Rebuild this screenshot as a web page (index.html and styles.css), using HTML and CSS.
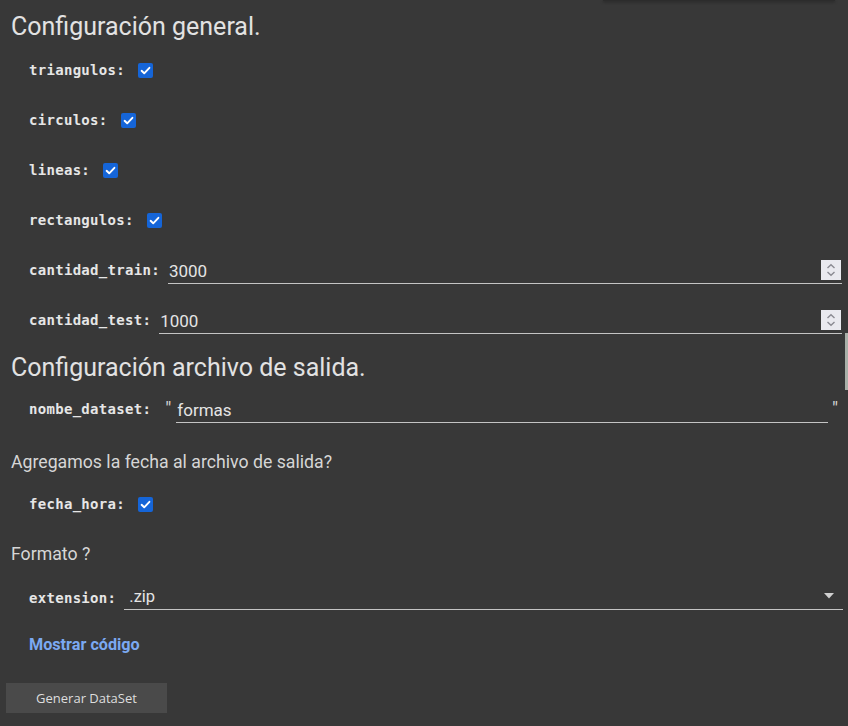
FILE: index.html
```
<!DOCTYPE html>
<html lang="es">
<head>
<meta charset="utf-8">
<title>Configuración</title>
<link rel="stylesheet" href="styles.css">
</head>
<body>
<div class="toolbar-edge"></div>
<div class="scroll-thumb"></div>
<main class="form">
  <h2 class="section-title first">Configuración general.</h2>

  <div class="field">
    <span class="label">triangulos:</span>
    <span class="check"><svg viewBox="0 0 15 15" width="15" height="15"><rect x="0" y="0" width="15" height="15" rx="2" fill="#1565d8"/><path d="M3.6 7.8 L6.2 10.3 L11.4 4.8" fill="none" stroke="#fff" stroke-width="1.9" stroke-linecap="round" stroke-linejoin="round"/></svg></span>
  </div>
  <div class="field">
    <span class="label">circulos:</span>
    <span class="check"><svg viewBox="0 0 15 15" width="15" height="15"><rect x="0" y="0" width="15" height="15" rx="2" fill="#1565d8"/><path d="M3.6 7.8 L6.2 10.3 L11.4 4.8" fill="none" stroke="#fff" stroke-width="1.9" stroke-linecap="round" stroke-linejoin="round"/></svg></span>
  </div>
  <div class="field">
    <span class="label">lineas:</span>
    <span class="check"><svg viewBox="0 0 15 15" width="15" height="15"><rect x="0" y="0" width="15" height="15" rx="2" fill="#1565d8"/><path d="M3.6 7.8 L6.2 10.3 L11.4 4.8" fill="none" stroke="#fff" stroke-width="1.9" stroke-linecap="round" stroke-linejoin="round"/></svg></span>
  </div>
  <div class="field">
    <span class="label">rectangulos:</span>
    <span class="check"><svg viewBox="0 0 15 15" width="15" height="15"><rect x="0" y="0" width="15" height="15" rx="2" fill="#1565d8"/><path d="M3.6 7.8 L6.2 10.3 L11.4 4.8" fill="none" stroke="#fff" stroke-width="1.9" stroke-linecap="round" stroke-linejoin="round"/></svg></span>
  </div>
  <div class="field">
    <span class="label">cantidad_train:</span>
    <div class="input number">
      <span class="value">3000</span>
      <span class="spinner"><svg viewBox="0 0 20 20" width="20" height="20"><path d="M6.5 8 L10 4.8 L13.5 8" fill="none" stroke="#8a8a92" stroke-width="1.4"/><path d="M6.5 12 L10 15.2 L13.5 12" fill="none" stroke="#8a8a92" stroke-width="1.4"/></svg></span>
    </div>
  </div>
  <div class="field">
    <span class="label">cantidad_test:</span>
    <div class="input number">
      <span class="value">1000</span>
      <span class="spinner"><svg viewBox="0 0 20 20" width="20" height="20"><path d="M6.5 8 L10 4.8 L13.5 8" fill="none" stroke="#8a8a92" stroke-width="1.4"/><path d="M6.5 12 L10 15.2 L13.5 12" fill="none" stroke="#8a8a92" stroke-width="1.4"/></svg></span>
    </div>
  </div>

  <h2 class="section-title second">Configuración archivo de salida.</h2>

  <div class="field field-tight">
    <span class="label">nombe_dataset:</span>
    <span class="quote open">"</span>
    <div class="input text"><span class="value">formas</span></div>
    <span class="quote close">"</span>
  </div>

  <p class="note note-1">Agregamos la fecha al archivo de salida?</p>

  <div class="field field-fecha">
    <span class="label">fecha_hora:</span>
    <span class="check"><svg viewBox="0 0 15 15" width="15" height="15"><rect x="0" y="0" width="15" height="15" rx="2" fill="#1565d8"/><path d="M3.6 7.8 L6.2 10.3 L11.4 4.8" fill="none" stroke="#fff" stroke-width="1.9" stroke-linecap="round" stroke-linejoin="round"/></svg></span>
  </div>

  <p class="note note-2">Formato ?</p>

  <div class="field field-ext">
    <span class="label">extension:</span>
    <div class="input select">
      <span class="value">.zip</span>
      <svg class="caret" viewBox="0 0 10 6" width="10" height="6"><path d="M0 0 L10 0 L5 5.5 Z" fill="#d0d0d0"/></svg>
    </div>
  </div>

  <a class="show-code" href="#">Mostrar código</a>

  <button class="run-button" type="button">Generar DataSet</button>
</main>
</body>
</html>
```

FILE: styles.css
```
html, body {
  margin: 0;
  padding: 0;
  background: #383838;
  height: 100%;
  overflow: hidden;
}

body {
  font-family: Roboto, "Noto Sans", sans-serif;
  color: #dcdcdc;
  position: relative;
}

.toolbar-edge {
  position: absolute;
  top: 0;
  left: 603px;
  width: 232px;
  height: 1px;
  background: #2c2c2c;
  box-shadow: 0 1px 3px rgba(0, 0, 0, 0.55);
}

.scroll-thumb {
  position: absolute;
  top: 333px;
  right: 0;
  width: 3px;
  height: 57px;
  background: #a9b0a9;
}

.form {
  display: flex;
  flex-direction: column;
  align-items: flex-start;
  padding: 11px 6px 0 11px;
}

.section-title {
  margin: 0;
  height: 32px;
  line-height: 32px;
  font-size: 25px;
  font-weight: 400;
  color: #e2e2e2;
  white-space: nowrap;
}

.section-title.first {
  margin-bottom: 3px;
}

.section-title.second {
  margin-top: 6px;
}

.field {
  display: flex;
  align-items: center;
  height: 50px;
  padding-left: 18px;
  align-self: stretch;
}

.field-tight {
  margin-top: 1px;
}

.field-fecha {
  margin-top: 6px;
}

.field-ext {
  margin-top: 8px;
}

.label {
  font-family: "DejaVu Sans Mono", "Liberation Mono", monospace;
  font-weight: 700;
  font-size: 14px;
  letter-spacing: 0.3px;
  line-height: 18px;
  margin-top: -2px;
  color: #e6e6e6;
  white-space: nowrap;
}

.check {
  display: flex;
  margin-left: 13px;
  margin-top: -1px;
}

.input {
  flex: 1;
  display: flex;
  align-items: center;
  height: 25px;
  border-bottom: 1px solid #c4c4c4;
  margin-left: 8px;
  box-sizing: border-box;
}

.input .value {
  flex: 1;
  font-size: 17px;
  color: #e4e4e4;
  line-height: 24px;
  padding-left: 1px;
}

.spinner {
  display: flex;
  width: 20px;
  height: 20px;
  background: #e9e9ef;
  margin-right: 1px;
  margin-bottom: 2px;
}

.quote {
  font-size: 19px;
  color: #d4d4d4;
  align-self: center;
}

.quote.open {
  margin-left: 14px;
  margin-top: -4px;
}

.quote.close {
  margin-left: 4px;
  margin-right: 4px;
  margin-top: -4px;
}

.input.text {
  margin-left: 5px;
}

.input.select {
  margin-left: 8px;
  margin-right: -1px;
  margin-top: -4px;
}

.input.select .value {
  padding-left: 5px;
  font-size: 16.5px;
}

.caret {
  margin-right: 9px;
  margin-bottom: 2px;
}

.note {
  margin: 0;
  height: 24px;
  line-height: 24px;
  font-size: 17.7px;
  color: #d6d6d6;
  white-space: nowrap;
}

.note-1 {
  margin-top: 15px;
}

.note-2 {
  margin-top: 12px;
}

.show-code {
  margin-top: 9px;
  margin-left: 18px;
  height: 24px;
  line-height: 24px;
  font-size: 16.2px;
  font-weight: 700;
  color: #7ba9f2;
  text-decoration: none;
}

.run-button {
  margin-top: 26px;
  margin-left: -5px;
  width: 161px;
  height: 30px;
  border: none;
  background: #4a4a4a;
  color: #dedede;
  font-family: "Open Sans", "Noto Sans", sans-serif;
  font-size: 13px;
  padding: 0;
}
```
